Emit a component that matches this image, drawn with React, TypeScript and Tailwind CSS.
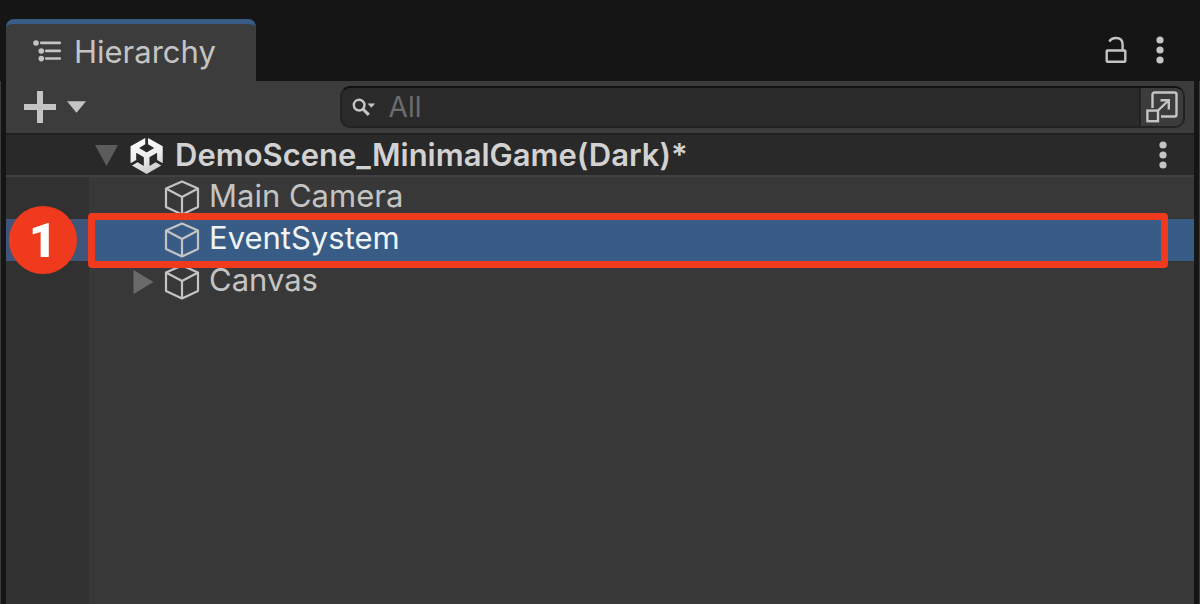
import type { ReactNode } from "react";

function Dots() {
  return (
    <svg width="8" height="28" viewBox="0 0 8 28" fill="#c4c4c4" aria-hidden="true">
      <circle cx="4" cy="4" r="3.6" />
      <circle cx="4" cy="14" r="3.6" />
      <circle cx="4" cy="24" r="3.6" />
    </svg>
  );
}

function ListIcon() {
  return (
    <svg width="28" height="24" viewBox="0 0 28 24" fill="#c4c4c4" aria-hidden="true">
      <circle cx="3" cy="3" r="2.8" />
      <rect x="7" y="1.6" width="21" height="2.6" rx="1" />
      <circle cx="8.3" cy="11" r="2.8" />
      <rect x="12" y="9.6" width="16" height="2.6" rx="1" />
      <circle cx="8.3" cy="18.6" r="2.8" />
      <rect x="12" y="17.2" width="16" height="2.6" rx="1" />
    </svg>
  );
}

function LockIcon() {
  return (
    <svg width="22" height="28" viewBox="0 0 22 28" fill="none" stroke="#c4c4c4" strokeWidth="2.4" aria-hidden="true">
      <rect x="1.7" y="14.500" width="18.6" height="11.2" rx="0.6" />
      <path d="M4.3 5.6C5.8 3 8 2 11 2c4.200 0 6.600 2.400 6.600 6.400V15" />
    </svg>
  );
}

function SearchIcon() {
  return (
    <svg width="26" height="22" viewBox="0 0 26 22" fill="none" aria-hidden="true">
      <circle cx="7.500" cy="9" r="5.600" stroke="#c4c4c4" strokeWidth="2.600" />
      <path d="M11.600 13.300l6 6" stroke="#c4c4c4" strokeWidth="3.200" />
      <path d="M16.300 7.200h8l-4 4.600z" fill="#c4c4c4" />
    </svg>
  );
}

function ExpandIcon() {
  return (
    <svg width="32" height="32" viewBox="0 0 32 32" fill="none" stroke="#c4c4c4" strokeWidth="2.400" aria-hidden="true">
      <path d="M6.500 17V3.500a2 2 0 0 1 2-2h20a2 2 0 0 1 2 2v20a2 2 0 0 1-2 2H15" />
      <rect x="1.400" y="19.600" width="10.600" height="10.600" />
      <path d="M11.500 20L22.500 9.500M14.500 9.300H22.800V18.500" />
    </svg>
  );
}

function CubeIcon() {
  return (
    <svg width="36" height="36" viewBox="0 0 36 36" fill="none" stroke="#c4c4c4" strokeWidth="2.200" strokeLinejoin="round" aria-hidden="true">
      <path d="M18 1.500L34 8.500V27L18 34.500L2 27V8.500zM2 8.500L18 17L34 8.500M18 17V34.500" />
    </svg>
  );
}

function SceneIcon() {
  return (
    <svg width="33" height="37" viewBox="1 -0.6 21.8 24.6" preserveAspectRatio="none" className="shrink-0" aria-hidden="true">
      <defs>
        <linearGradient id="scene-shade" x1="0" y1="0" x2="0.300" y2="1">
          <stop offset="0" stopColor="#ffffff" />
          <stop offset="0.600" stopColor="#eeeeee" />
          <stop offset="1" stopColor="#cfcfcf" />
        </linearGradient>
      </defs>
      <path
        fill="url(#scene-shade)"
        d="m12.9288 4.2939 3.7997 2.1929c.1366.077.1415.2905 0 .3675l-4.515 2.6076a.4192.4192 0 0 1-.4246 0L7.274 6.8543c-.139-.0745-.1415-.293 0-.3675l3.7972-2.193V0L1.3758 5.5977V16.793l3.7177-2.1456v-4.3858c-.0025-.1565.1813-.2682.318-.1838l4.5148 2.6076a.4252.4252 0 0 1 .2136.3676v5.2127c.0025.1565-.1813.2682-.3179.1838l-3.7996-2.1929-3.7178 2.1457L12 24l9.6954-5.5977-3.7178-2.1457-3.7996 2.1929c-.1341.082-.3229-.0248-.3154-.1838V13.053c0-.1565.087-.2956.2136-.3676l4.515-2.6076c.134-.082.3228.0224.3154.1838v4.3858l3.7177 2.1456V5.5977L12.9288 0z"
      />
    </svg>
  );
}

function ItemRow({ name, selected, expandable, children }: { name: string; selected?: boolean; expandable?: boolean; children?: ReactNode }) {
  return (
    <li role="treeitem" aria-selected={!!selected} className={`relative flex h-[42px] ${selected ? "text-[#f0f3f6]" : "text-[#c4c4c4]"}`}>
      <div className={`w-[83px] shrink-0 ${selected ? "bg-[#3e5478]" : ""}`} />
      <div className={`flex min-w-0 grow items-center pl-11 ${selected ? "bg-[#385c85]" : ""}`}>
        <span className="flex w-[31px] shrink-0 items-center">
          {expandable && (
            <button type="button" aria-label={`Expand ${name}`}>
              <svg width="21" height="24" viewBox="0 0 20 24" fill="#6a6a6a" aria-hidden="true">
                <path d="M0 0L20 12L0 24z" />
              </svg>
            </button>
          )}
        </span>
        <span className="flex w-[45px] shrink-0">
          <CubeIcon />
        </span>
        <span className="truncate pb-1">{name}</span>
      </div>
      {children}
    </li>
  );
}

export default function App() {
  return (
    <div className="flex h-screen flex-col bg-[#151515] font-['Inter',sans-serif] text-[31px] leading-10 text-[#c4c4c4]">
      <header className="flex h-[81px] shrink-0 items-end justify-between pl-1.5 pr-9">
        <div role="tab" aria-selected="true" className="flex h-[62px] w-[250px] items-center gap-[13px] overflow-hidden rounded-t-lg border-t-[5px] border-[#385c85] bg-[#3c3c3c] pb-0.5 pl-[27px]">
          <ListIcon />
          <h1>Hierarchy</h1>
        </div>
        <div className="flex h-[62px] items-center gap-[29px]">
          <button type="button" aria-label="Lock">
            <LockIcon />
          </button>
          <button type="button" aria-label="Panel options">
            <Dots />
          </button>
        </div>
      </header>
      <div className="flex min-h-0 grow border-x border-[#3c3c3c] px-[5px]">
        <main className="flex min-w-0 grow flex-col bg-[#383838]">
          <div className="flex h-[52px] shrink-0 items-center justify-between gap-8 bg-[#3c3c3c] pl-[18px] pr-[9px]">
            <button type="button" aria-label="Create" className="flex shrink-0 items-center gap-[11px]">
              <svg width="32" height="32" viewBox="0 0 32 32" fill="#c4c4c4" aria-hidden="true">
                <path d="M13 0h6v13h13v6H19v13h-6V19H0v-6h13z" />
              </svg>
              <svg width="19" height="12" viewBox="0 0 20 12" fill="#c4c4c4" aria-hidden="true">
                <path d="M0 0h20L10 12z" />
              </svg>
            </button>
            <div className="flex h-[42px] w-[72.8%] items-stretch overflow-hidden rounded-[10px] border-2 border-[#222222] border-t-[#111111] bg-[#2a2a2a]">
              <label className="flex min-w-0 grow items-center gap-3 pl-2.5">
                <SearchIcon />
                <input type="text" placeholder="All" aria-label="Search hierarchy" className="w-full min-w-0 bg-transparent text-[28px] outline-none placeholder:text-[#6c6c6c]" />
              </label>
              <button type="button" aria-label="Open search window" className="flex w-11 shrink-0 items-center justify-center border-l-2 border-[#222222] bg-[#3c3c3c]">
                <ExpandIcon />
              </button>
            </div>
          </div>
          <div className="flex h-11 shrink-0 items-center border-b-2 border-t-2 border-b-[#414141] border-t-[#202020] bg-[#292929] pl-[89px] pr-[27px]">
            <button type="button" aria-label="Collapse scene" className="mr-3 shrink-0">
              <svg width="23" height="21" viewBox="0 0 23 21" fill="#5c5c5c" aria-hidden="true">
                <path d="M0 0h23L11.500 21z" />
              </svg>
            </button>
            <SceneIcon />
            <h2 className="ml-3 min-w-0 grow truncate font-semibold text-[#d2d2d2]">DemoScene_MinimalGame(Dark)*</h2>
            <button type="button" aria-label="Scene options" className="shrink-0">
              <Dots />
            </button>
          </div>
          <div className="flex grow flex-col bg-[linear-gradient(to_right,#313131_83px,#383838_83px)]">
            <ul role="tree" aria-label="Scene objects">
              <ItemRow name="Main Camera" />
              <ItemRow name="EventSystem" selected>
                <span className="absolute -top-[13px] left-[3px] z-10 flex size-[68px] items-center justify-center rounded-full bg-[#f03a1e] pt-0.5 font-['Roboto',sans-serif] text-[49px] font-black text-white">1</span>
                <span className="absolute -bottom-[7px] -top-1.5 left-[82px] right-[26px] z-10 rounded-[4px] border-[7px] border-[#f03a1e]" />
              </ItemRow>
              <ItemRow name="Canvas" expandable />
            </ul>
          </div>
        </main>
      </div>
    </div>
  );
}
